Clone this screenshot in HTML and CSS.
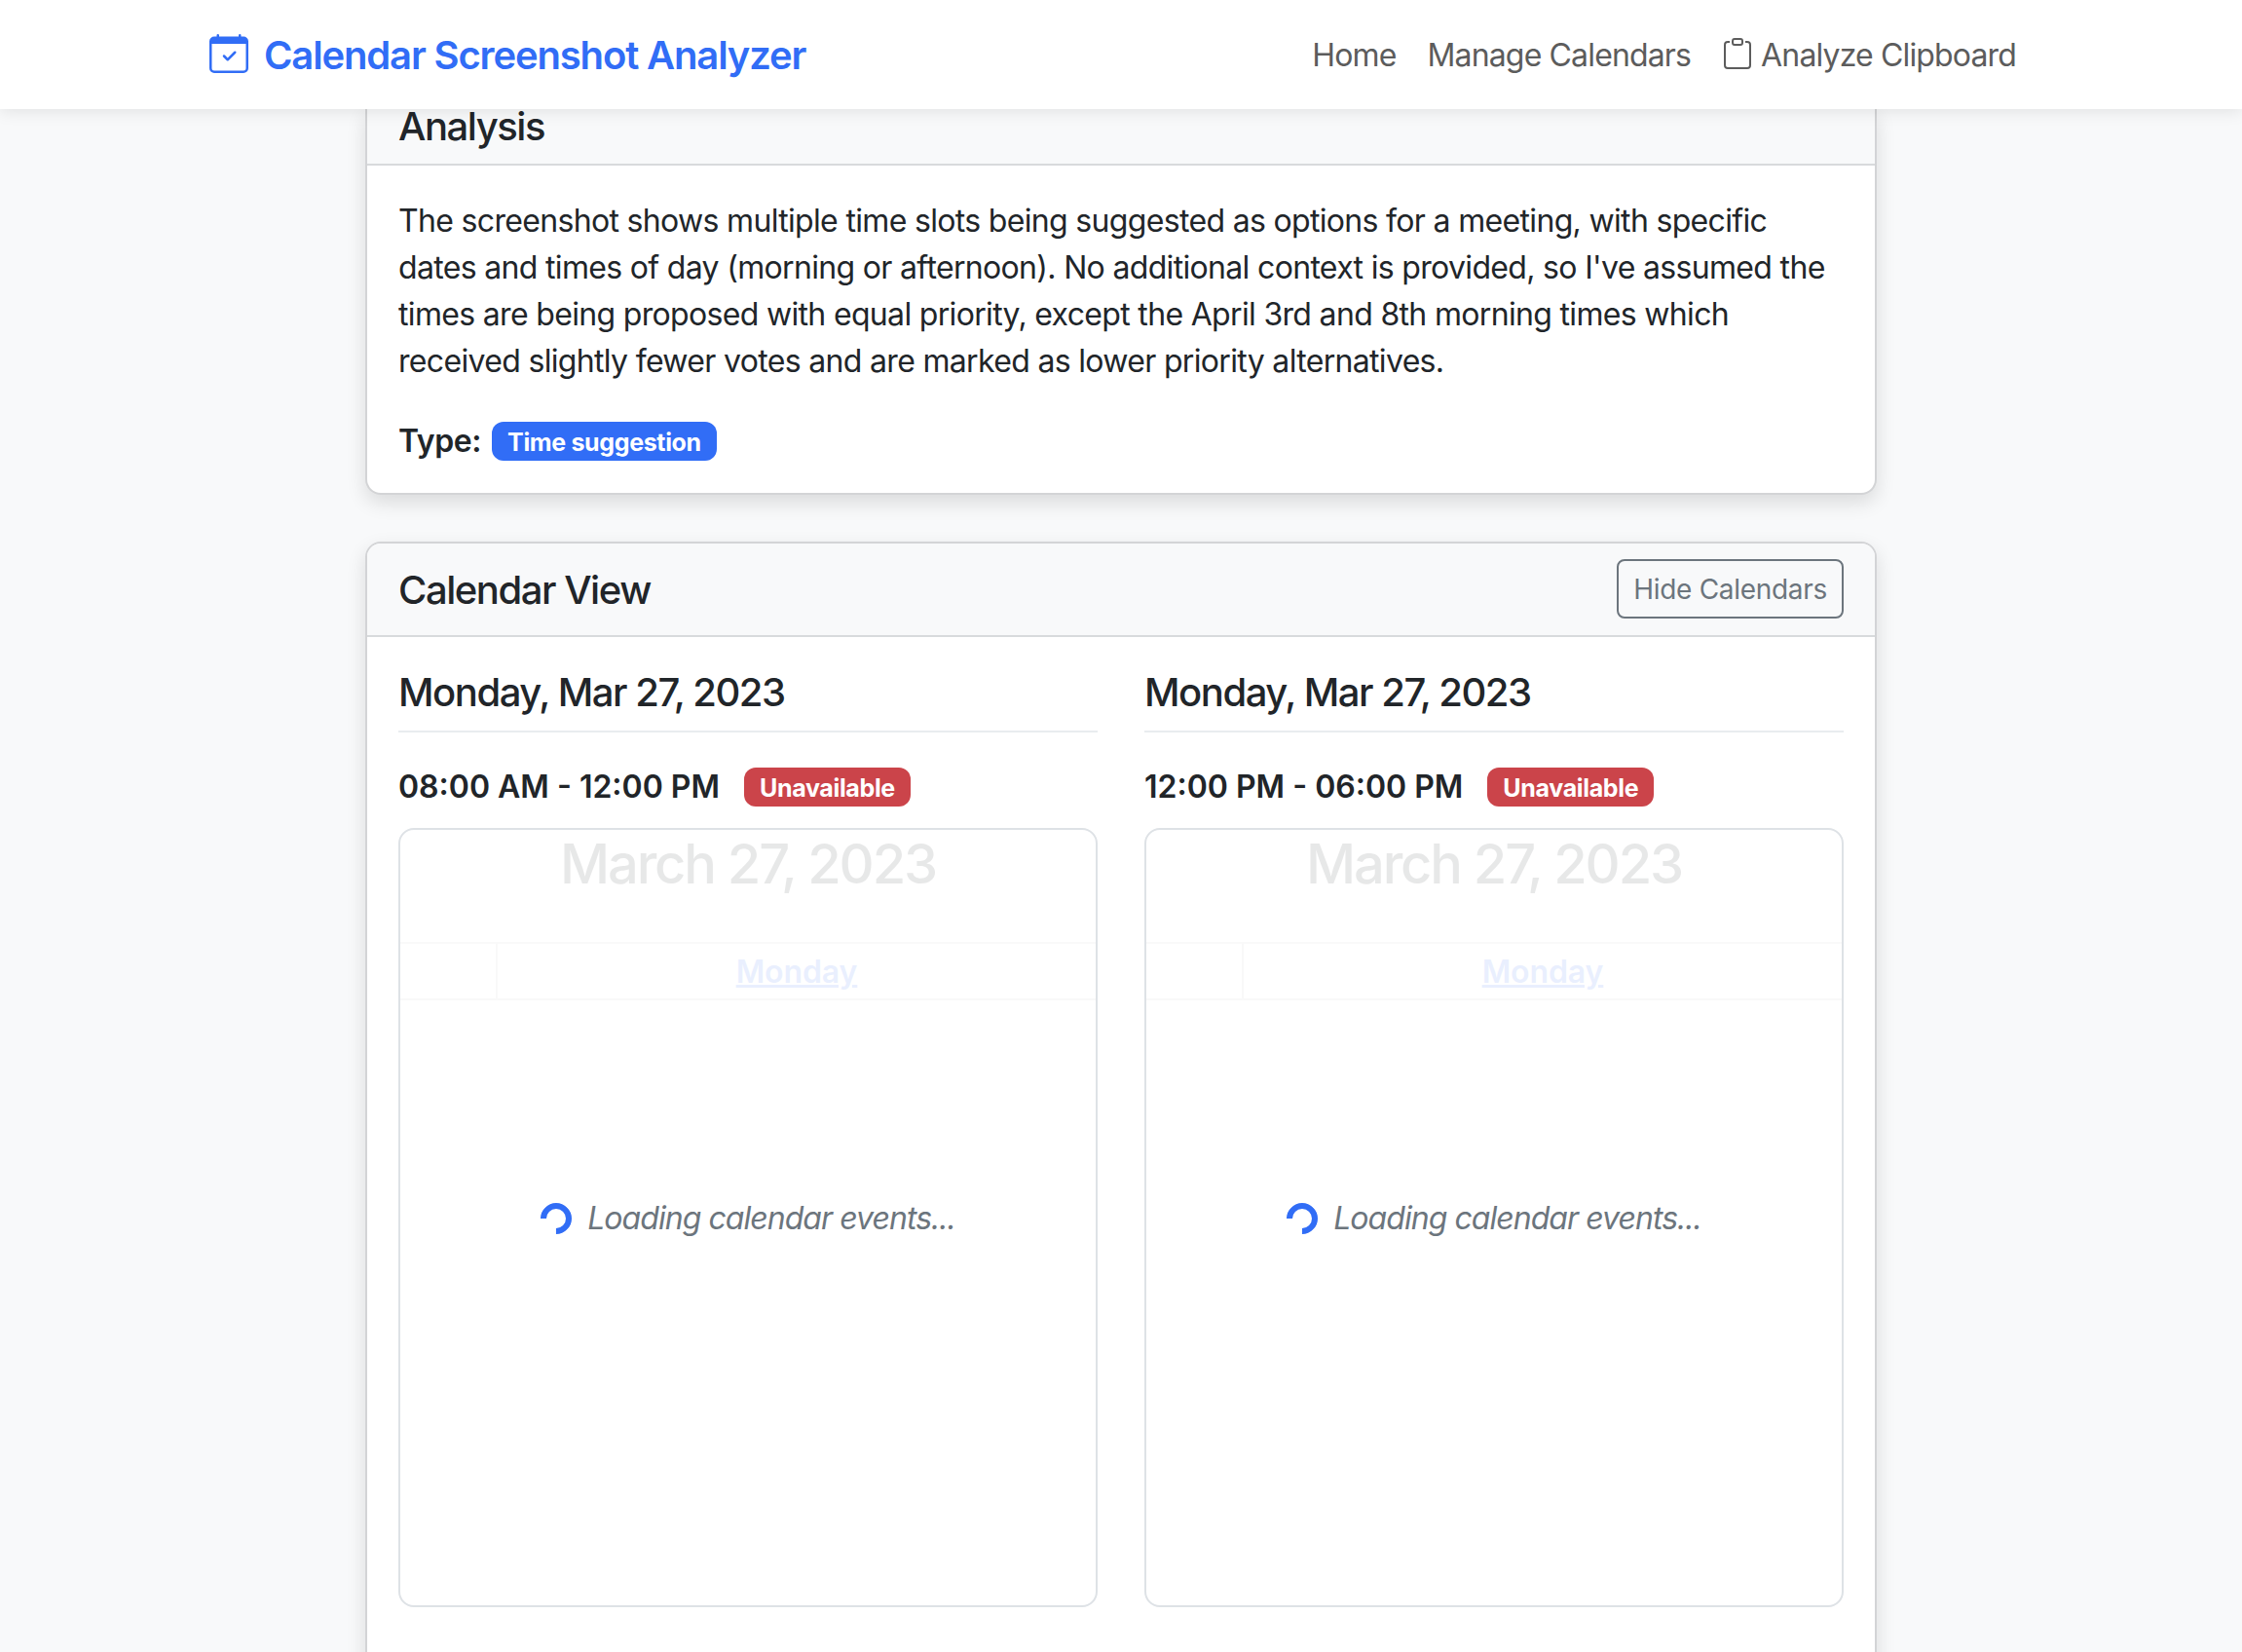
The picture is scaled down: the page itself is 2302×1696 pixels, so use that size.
FILE: index.html
```html
<!DOCTYPE html>
<html lang="en">
<head>
  <meta charset="UTF-8">
  <title>Calendar Screenshot Analyzer</title>
  <link rel="stylesheet" href="styles.css">
</head>
<body>

  <nav class="navbar">
    <a class="brand" href="#">
      <svg class="brand-icon" viewBox="0 0 16 16" fill="currentColor">
        <path d="M10.854 7.146a.5.5 0 0 1 0 .708l-3 3a.5.5 0 0 1-.708 0l-1.5-1.5a.5.5 0 1 1 .708-.708L7.5 9.793l2.646-2.647a.5.5 0 0 1 .708 0z"/>
        <path d="M3.5 0a.5.5 0 0 1 .5.5V1h8V.5a.5.5 0 0 1 1 0V1h1a2 2 0 0 1 2 2v11a2 2 0 0 1-2 2H2a2 2 0 0 1-2-2V3a2 2 0 0 1 2-2h1V.5a.5.5 0 0 1 .5-.5zM1 4v10a1 1 0 0 0 1 1h12a1 1 0 0 0 1-1V4H1z"/>
      </svg>
      Calendar Screenshot Analyzer
    </a>
    <div class="nav-links">
      <a href="#">Home</a>
      <a href="#">Manage Calendars</a>
      <a class="nav-clipboard" href="#">
        <svg class="clipboard-icon" viewBox="0 0 16 16" fill="currentColor">
          <path d="M4 1.5H3a2 2 0 0 0-2 2V14a2 2 0 0 0 2 2h10a2 2 0 0 0 2-2V3.5a2 2 0 0 0-2-2h-1v1h1a1 1 0 0 1 1 1V14a1 1 0 0 1-1 1H3a1 1 0 0 1-1-1V3.5a1 1 0 0 1 1-1h1v-1z"/>
          <path d="M9.5 1a.5.5 0 0 1 .5.5v1a.5.5 0 0 1-.5.5h-3a.5.5 0 0 1-.5-.5v-1a.5.5 0 0 1 .5-.5h3zm-3-1A1.5 1.5 0 0 0 5 1.5v1A1.5 1.5 0 0 0 6.5 4h3A1.5 1.5 0 0 0 11 2.5v-1A1.5 1.5 0 0 0 9.5 0h-3z"/>
        </svg>
        Analyze Clipboard
      </a>
    </div>
  </nav>

  <main class="content">
    <section class="card card-analysis">
      <div class="card-header">
        <h3>Analysis</h3>
      </div>
      <div class="card-body">
        <p class="analysis-text">The screenshot shows multiple time slots being suggested as options for a meeting, with specific dates and times of day (morning or afternoon). No additional context is provided, so I've assumed the times are being proposed with equal priority, except the April 3rd and 8th morning times which received slightly fewer votes and are marked as lower priority alternatives.</p>
        <div class="type-row">
          <strong>Type:</strong>
          <span class="badge badge-blue">Time suggestion</span>
        </div>
      </div>
    </section>

    <section class="card">
      <div class="card-header header-split">
        <h3>Calendar View</h3>
        <button class="btn-outline">Hide Calendars</button>
      </div>
      <div class="card-body slots">

        <div class="slot">
          <h4 class="slot-date">Monday, Mar 27, 2023</h4>
          <div class="slot-time">
            <strong>08:00 AM - 12:00 PM</strong>
            <span class="badge badge-red">Unavailable</span>
          </div>
          <div class="calendar-box">
            <div class="calendar-faded">
              <div class="calendar-title">March 27, 2023</div>
              <div class="calendar-head">
                <div class="axis-cell"></div>
                <div class="day-cell"><a href="#">Monday</a></div>
              </div>
            </div>
            <div class="loading">
              <span class="spinner"></span>
              <em>Loading calendar events...</em>
            </div>
          </div>
        </div>

        <div class="slot">
          <h4 class="slot-date">Monday, Mar 27, 2023</h4>
          <div class="slot-time">
            <strong>12:00 PM - 06:00 PM</strong>
            <span class="badge badge-red">Unavailable</span>
          </div>
          <div class="calendar-box">
            <div class="calendar-faded">
              <div class="calendar-title">March 27, 2023</div>
              <div class="calendar-head">
                <div class="axis-cell"></div>
                <div class="day-cell"><a href="#">Monday</a></div>
              </div>
            </div>
            <div class="loading">
              <span class="spinner"></span>
              <em>Loading calendar events...</em>
            </div>
          </div>
        </div>

      </div>
    </section>
  </main>

</body>
</html>
```

FILE: styles.css
```css
html, body {
  height: 1696px;
  overflow: hidden;
}

body {
  margin: 0;
  font-family: Inter, 'Noto Sans', sans-serif;
  font-size: 32px;
  line-height: 48px;
  letter-spacing: -0.67px;
  color: #212529;
  background-color: #f8f9fa;
}

a {
  color: inherit;
  text-decoration: none;
}

.navbar {
  height: 112px;
  padding: 0 232px 0 215px;
  display: flex;
  align-items: center;
  justify-content: space-between;
  background-color: #fff;
  box-shadow: 0 2px 16px rgba(0,0,0,0.1);
  position: relative;
  z-index: 10;
}

.brand {
  display: flex;
  align-items: center;
  gap: 16px;
  padding-top: 2px;
  font-size: 40px;
  font-weight: 600;
  letter-spacing: -1.15px;
  color: #316df6;
}

.brand-icon {
  width: 40px;
  height: 40px;
  margin-top: -4px;
}

.nav-links {
  display: flex;
  align-items: center;
  gap: 32px;
  padding-top: 2px;
  font-size: 32px;
  letter-spacing: -0.85px;
  color: #5c5c5c;
}

.nav-clipboard {
  display: flex;
  align-items: center;
  gap: 8px;
}

.clipboard-icon {
  width: 32px;
  height: 32px;
  margin-top: -4px;
}

.content {
  width: 1552px;
  margin: 0 auto;
}

.card {
  margin-bottom: 48px;
  background-color: #fff;
  border: 2px solid #d3d4d6;
  border-radius: 16px;
  box-shadow: 0 8px 20px rgba(0,0,0,0.12);
}

.card-analysis {
  border-top: none;
  border-top-left-radius: 0;
  border-top-right-radius: 0;
}

.card-header {
  padding: 16px 32px 17px;
  background-color: #f8f9fa;
  border-bottom: 2px solid #d8dadc;
  border-radius: 14px 14px 0 0;
}

.card-analysis .card-header {
  height: 58px;
  box-sizing: border-box;
  padding: 0 32px;
  border-radius: 0;
}

.card-header h3 {
  margin: 0;
  font-size: 40px;
  line-height: 48px;
  font-weight: 500;
  letter-spacing: -1.45px;
}

.card-analysis .card-header h3 {
  line-height: 36px;
}

.header-split {
  display: flex;
  align-items: center;
  justify-content: space-between;
}

.header-split h3 {
  padding-top: 2px;
}

.btn-outline {
  height: 61px;
  padding: 1px 15px 0;
  font-family: inherit;
  font-size: 28px;
  letter-spacing: -0.3px;
  color: #6c757d;
  background: transparent;
  border: 2px solid #6c757d;
  border-radius: 8px;
}

.card-body {
  padding: 32px;
}

.card-analysis .card-body {
  padding: 33px 32px 29px;
}

.analysis-text {
  margin: 0 0 34px;
}

.type-row {
  display: flex;
  align-items: center;
  gap: 11px;
}

.type-row strong {
  font-weight: 600;
  letter-spacing: -0.4px;
}

.badge {
  height: 40px;
  box-sizing: border-box;
  padding: 2px 16px 0;
  display: inline-flex;
  align-items: center;
  font-size: 25px;
  font-weight: 700;
  letter-spacing: -0.35px;
  color: #fff;
  border-radius: 12px;
}

.badge-blue {
  background-color: #316df6;
}

.badge-red {
  background-color: #cb444a;
}

.slots {
  display: grid;
  grid-template-columns: 1fr 1fr;
  gap: 48px;
  height: 1200px; /* card runs on past the fold */
  align-content: start;
}

.slot-date {
  margin: 0 0 32px;
  padding-bottom: 14px;
  font-size: 40px;
  line-height: 50px;
  font-weight: 500;
  letter-spacing: -1.45px;
  border-bottom: 2px solid #e9ecef;
}

.slot-time {
  display: flex;
  align-items: center;
  gap: 25px;
  margin-bottom: 18px;
}

.slot-time strong {
  font-size: 32px;
  font-weight: 600;
  letter-spacing: 0;
}

.calendar-box {
  height: 800px;
  box-sizing: border-box;
  position: relative;
  border: 2px solid #dee2e6;
  border-radius: 16px;
}

.calendar-faded {
  opacity: 0.1;
}

.calendar-title {
  margin-bottom: 44px;
  font-size: 56px;
  line-height: 71px;
  font-weight: 500;
  letter-spacing: -2.1px;
  text-align: center;
}

.calendar-head {
  height: 60px;
  box-sizing: border-box;
  display: flex;
  border-top: 2px solid #ccc;
  border-bottom: 2px solid #ccc;
}

.axis-cell {
  width: 98px;
  border-right: 2px solid #ccc;
}

.day-cell {
  flex: 1;
  text-align: center;
  font-size: 32px;
  line-height: 58px;
  font-weight: 600;
  letter-spacing: -0.1px;
}

.day-cell a {
  color: #316df6;
  text-decoration: underline;
}

.loading {
  position: absolute;
  inset: 0;
  padding-top: 2px;
  display: flex;
  align-items: center;
  justify-content: center;
  gap: 16px;
  letter-spacing: -0.95px;
  color: #6c757d;
}

.spinner {
  width: 32px;
  height: 32px;
  box-sizing: border-box;
  border: 6px solid #316df6;
  border-right-color: transparent;
  border-radius: 50%;
  transform: rotate(135deg);
}
```
